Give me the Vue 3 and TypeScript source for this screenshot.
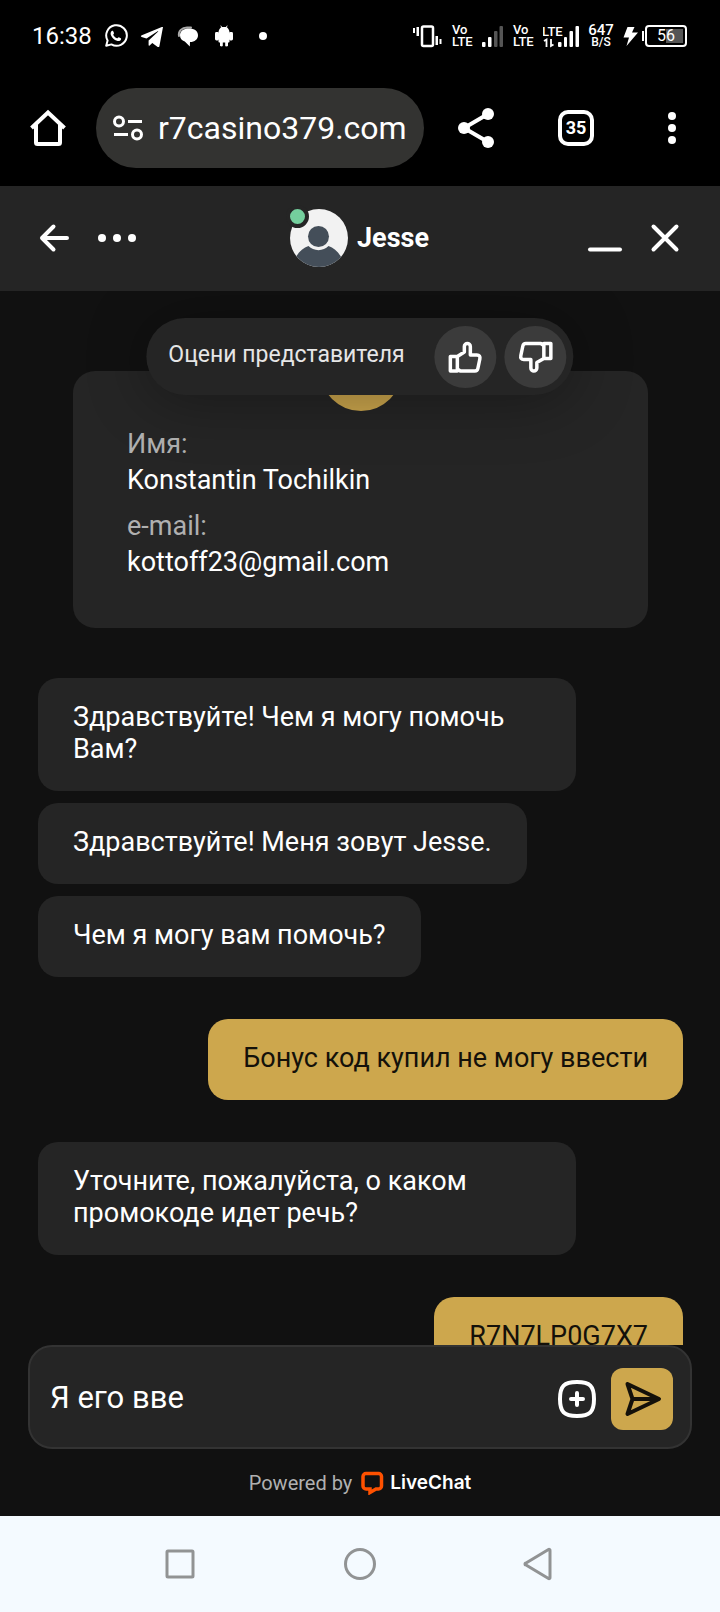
<script setup lang="ts">
import { ref } from 'vue'

interface Message {
  id: number
  text: string
}

interface MessageGroup {
  id: number
  author: 'agent' | 'visitor'
  messages: Message[]
}

const draft = ref('Я его вве')

const profile = [
  { label: 'Имя:', value: 'Konstantin Tochilkin' },
  { label: 'e-mail:', value: 'kottoff23@gmail.com' },
]

const groups: MessageGroup[] = [
  {
    id: 1,
    author: 'agent',
    messages: [
      { id: 1, text: 'Здравствуйте! Чем я могу помочь Вам?' },
      { id: 2, text: 'Здравствуйте! Меня зовут Jesse.' },
      { id: 3, text: 'Чем я могу вам помочь?' },
    ],
  },
  { id: 2, author: 'visitor', messages: [{ id: 4, text: 'Бонус код купил не могу ввести' }] },
  { id: 3, author: 'agent', messages: [{ id: 5, text: 'Уточните, пожалуйста, о каком промокоде идет речь?' }] },
  { id: 4, author: 'visitor', messages: [{ id: 6, text: 'R7N7LP0G7X7' }] },
]
</script>

<template>
  <div class="phone">
    <div class="status">
      <div class="status-left">
        <span class="time">16:38</span>
        <svg width="24" height="24" viewBox="0 0 24 24" aria-hidden="true">
          <path d="M2.2 21.8 3.6 16.6A10.3 10.3 0 1 1 7.4 20.4Z" fill="none" stroke="#fff" stroke-width="2" stroke-linejoin="round" />
          <path d="M7.2 7.4c.6-.8 1.600-1 2-.2l.8 1.900c.2.5-.9 1.300-.7 1.800.8 1.500 2.100 2.700 3.700 3.300.6.2 1.200-1.200 1.800-1l2 1c.7.4.2 1.700-.5 2.200-1 .7-2.200.8-3.400.4-2.700-.9-4.700-2.900-5.800-5.300-.6-1.400-.7-3 .1-4.100Z" fill="#fff" />
        </svg>
        <svg width="24" height="24" viewBox="0 0 24 24" aria-hidden="true">
          <path d="M23 3 19.400 22.300c-.2.900-.9 1-1.700.6l-5.400-4-2.700 2.700c-.6.5-1 .2-1-.6v-4.400L18.200 7.600c.4-.4-.1-.6-.6-.3L6.500 14.400 1.600 12.900c-1-.4-1-1.100.2-1.600L21.800 3.100c.7-.3 1.300-.2 1.200-.1Z" fill="#fff" />
        </svg>
        <svg width="24" height="24" viewBox="0 0 24 24" aria-hidden="true">
          <path d="M3 12C2 7 6 3.500 11 3.500h4" fill="none" stroke="#aaa" stroke-width="2" stroke-linecap="round" />
          <path d="M13 4.500c5.500 0 9 2.700 9 6.700 0 4-3.200 6.700-8 6.800l-.2 4.600-5-5C5.700 16.500 4 14.300 4 11.200 4 7.200 7.500 4.500 13 4.500Z" fill="#fff" />
        </svg>
        <svg width="24" height="24" viewBox="0 0 24 24" fill="#fff" aria-hidden="true">
          <path d="M6.500 8C7 5 8.400 3.800 9.300 3.300L8.300 1.800l.6-.3 1.200 1.600h3.800l1.200-1.600.6.300-1 1.500C15.600 3.800 17 5 17.500 8v9.500c0 .6-.4 1-1 1H16v3c0 1.200-2.800 1.200-2.800 0v-3h-2.400v3c0 1.200-2.800 1.200-2.800 0v-3h-.5c-.6 0-1-.4-1-1Z" />
          <rect x="3" y="8" width="4" height="8.500" rx="1.400" />
          <rect x="17" y="8" width="4" height="8.500" rx="1.400" />
        </svg>
        <svg width="24" height="24" viewBox="0 0 24 24" aria-hidden="true"><circle cx="15" cy="12" r="4" fill="#fff" /></svg>
      </div>
      <div class="status-right">
        <svg width="30" height="24" viewBox="0 0 30 24" fill="#fff" aria-hidden="true">
          <rect x="10" y="2.500" width="11" height="19.500" rx="1.500" fill="none" stroke="#fff" stroke-width="2.500" />
          <rect x="1" y="4" width="2" height="5" /><rect x="4.500" y="3" width="2.500" height="9" />
          <rect x="23.500" y="12" width="2.500" height="9" /><rect x="27.500" y="15" width="2" height="5" />
        </svg>
        <span class="volte"><span>Vo</span><span>LTE</span></span>
        <svg width="21" height="24" viewBox="0 0 21 24" fill="#fff" aria-hidden="true">
          <rect x="0" y="18" width="3.500" height="5" rx="1" /><rect x="6" y="13" width="3.500" height="10" rx="1" />
          <g fill="#555"><rect x="12" y="7" width="3.500" height="16" rx="1" /><rect x="17.500" y="2" width="3.500" height="21" rx="1" /></g>
        </svg>
        <span class="volte"><span>Vo</span><span>LTE</span></span>
        <svg width="36" height="24" viewBox="0 0 36 24" fill="#fff" aria-hidden="true">
          <text class="net" x="-1" y="12">LTE</text>
          <path d="M1 17 3.500 15.500V23M8 15V22L10.500 20.500" fill="none" stroke="#fff" stroke-width="1.800" />
          <rect x="15" y="18" width="3.500" height="5" rx="1" /><rect x="21" y="13" width="3" height="10" rx="1" />
          <rect x="26.500" y="7" width="3.500" height="16" rx="1" /><rect x="32.500" y="2" width="3.500" height="21" rx="1" />
        </svg>
        <span class="speed"><b>647</b><span>B/S</span></span>
        <span class="power">
          <svg width="16" height="24" viewBox="0 0 16 24" aria-hidden="true"><path d="M4.500 3H11.500L9 8.500H15L3.500 22l2.500-8.500H.5Z" fill="#fff" /></svg>
          <span class="cap"></span>
          <span class="battery">56</span>
        </span>
      </div>
    </div>

    <div class="toolbar">
      <button class="plain home" aria-label="Home">
        <svg width="40" height="40" viewBox="0 0 40 40" fill="none" stroke="#fff" stroke-width="4" stroke-linejoin="round" stroke-linecap="round">
          <path d="M3.500 20 20 4.500 36.500 20" stroke-linecap="butt" stroke-linejoin="miter" />
          <path d="M8 17V34.500a1.500 1.500 0 0 0 1.500 1.500h21a1.500 1.500 0 0 0 1.500-1.500V17" />
        </svg>
      </button>
      <button class="address">
        <svg width="32" height="28" viewBox="0 0 32 28" fill="none" stroke="#fff" stroke-width="3" aria-hidden="true">
          <circle cx="7" cy="7.500" r="4.500" /><path d="M16 7.500H30M2 20.500H16" /><circle cx="25" cy="20.500" r="4.500" />
        </svg>
        <span>r7casino379.com</span>
      </button>
      <div class="tools">
        <button class="plain" aria-label="Share">
          <svg width="40" height="40" viewBox="0 0 40 40" fill="#fff"><path d="M32 6 8 20 32 34" fill="none" stroke="#fff" stroke-width="4" /><circle cx="32" cy="6" r="6" /><circle cx="8" cy="20" r="6" /><circle cx="32" cy="34" r="6" /></svg>
        </button>
        <button class="plain" aria-label="Tabs"><span class="tabs">35</span></button>
        <button class="plain" aria-label="Menu">
          <svg width="40" height="40" viewBox="0 0 40 40" fill="#fff"><circle cx="20" cy="8" r="4" /><circle cx="20" cy="20" r="4" /><circle cx="20" cy="32" r="4" /></svg>
        </button>
      </div>
    </div>

    <header class="header">
      <div class="side">
        <button class="plain" aria-label="Back">
          <svg width="34" height="34" viewBox="0 0 34 34" fill="none" stroke="#fff" stroke-width="4" stroke-linecap="round" stroke-linejoin="round"><path d="M16.500 5.500 5 17 16.500 28.500M5 17H30" /></svg>
        </button>
        <button class="plain" aria-label="Options">
          <svg width="42" height="34" viewBox="0 0 42 34" fill="#fff"><circle cx="6" cy="17" r="4" /><circle cx="21" cy="17" r="4" /><circle cx="36" cy="17" r="4" /></svg>
        </button>
      </div>
      <div class="agent">
        <div class="avatar">
          <svg width="58" height="58" viewBox="0 0 58 58" aria-hidden="true">
            <clipPath id="face"><circle cx="29" cy="29" r="29" /></clipPath>
            <g clip-path="url(#face)">
              <rect width="58" height="58" fill="#f2f2f2" />
              <circle cx="28.500" cy="27.500" r="10.500" fill="#444e59" />
              <path d="M5 50C8 43 13 39 18.500 37c5 5.500 15 5.500 20 0C44 39 49 43 52 50V58H5Z" fill="#444e59" />
            </g>
          </svg>
          <span class="online"></span>
        </div>
        <h1>Jesse</h1>
      </div>
      <div class="side end">
        <button class="plain" aria-label="Minimize">
          <svg width="36" height="34" viewBox="0 0 36 34" stroke="#fff" stroke-width="4" stroke-linecap="round"><path d="M3 28.500H33" /></svg>
        </button>
        <button class="plain" aria-label="Close">
          <svg width="34" height="34" viewBox="0 0 34 34" stroke="#fff" stroke-width="4" stroke-linecap="round"><path d="M5.500 5.500 28.500 28.500M28.500 5.500 5.500 28.500" /></svg>
        </button>
      </div>
    </header>

    <main class="chat">
      <div class="rating">
        <span>Оцени представителя</span>
        <button aria-label="Нравится">
          <svg width="38" height="38" viewBox="0 0 38 38" fill="none" stroke="#fff" stroke-width="3.500" stroke-linejoin="round">
            <path d="M4 18.500H11V33H4ZM11 18.500 18 14V8.500C18 4.500 24 4.500 24 8.500V17H30.500C33 17 34 18.500 33.500 21L31.500 30.500C31.200 32 30 33 28.500 33H14L11 31" />
          </svg>
        </button>
        <button aria-label="Не нравится">
          <svg width="38" height="38" viewBox="0 0 38 38" fill="none" stroke="#fff" stroke-width="3.500" stroke-linejoin="round">
            <path d="M34.500 5.500H27.500V20.500H34.500ZM27.500 20.500 20.500 24.500V30C20.500 34 14.500 34 14.500 30V21.500H7.500C5 21.500 4 20 4.500 17.500L6.500 8C6.800 6.500 8 5.500 9.500 5.500H24.500L27.500 7.500" />
          </svg>
        </button>
      </div>

      <section class="card">
        <span class="badge"></span>
        <dl>
          <template v-for="row in profile" :key="row.label">
            <dt>{{ row.label }}</dt>
            <dd>{{ row.value }}</dd>
          </template>
        </dl>
      </section>

      <div v-for="group in groups" :key="group.id" class="group" :class="group.author">
        <p v-for="message in group.messages" :key="message.id" class="bubble">{{ message.text }}</p>
      </div>
    </main>

    <form class="composer" @submit.prevent>
      <input v-model="draft" type="text" aria-label="Сообщение" />
      <button type="button" class="plain" aria-label="Прикрепить">
        <svg width="40" height="40" viewBox="0 0 40 40" fill="none" stroke="#fff" stroke-width="4" stroke-linecap="round">
          <path d="M20 3C33 3 37 7 37 20S33 37 20 37 3 33 3 20 7 3 20 3ZM20 14V26M14 20H26" />
        </svg>
      </button>
      <button type="submit" class="send" aria-label="Отправить">
        <svg width="40" height="40" viewBox="0 0 40 40" fill="none" stroke="#14110a" stroke-width="4" stroke-linejoin="round">
          <path d="M5.500 5 37 20 5.500 35 10.500 20ZM10.500 20H36" />
        </svg>
      </button>
    </form>

    <footer class="powered">
      <span>Powered by</span>
      <a href="#">
        <svg width="24" height="24" viewBox="0 0 24 24" aria-hidden="true">
          <path d="M6 2.500H18.500a3 3 0 0 1 3 3V15a3 3 0 0 1-3 3H16L10 21.500V18H6a3 3 0 0 1-3-3V5.500a3 3 0 0 1 3-3Z" fill="none" stroke="#ff5100" stroke-width="3.500" />
        </svg>
        LiveChat
      </a>
    </footer>

    <nav class="system">
      <button class="plain" aria-label="Recent apps"><svg width="36" height="36" viewBox="0 0 36 36"><rect x="5" y="5" width="26" height="26" rx="1" /></svg></button>
      <button class="plain" aria-label="Home screen"><svg width="36" height="36" viewBox="0 0 36 36"><circle cx="18" cy="18" r="14.500" /></svg></button>
      <button class="plain" aria-label="System back"><svg width="36" height="36" viewBox="0 0 36 36"><path d="M26.500 3.500a1 1 0 0 1 1.500 1v27a1 1 0 0 1-1.500 1L4 19a1 1 0 0 1 0-2Z" /></svg></button>
    </nav>
  </div>
</template>

<style>
html,
body {
  margin: 0;
  background: #111;
}
</style>

<style scoped>
.phone {
  display: flex;
  flex-direction: column;
  height: 100vh;
  background: #111;
  color: #fff;
  font-family: Roboto, 'Noto Sans', sans-serif;
  font-size: 27px;
}

.phone * {
  box-sizing: border-box;
}

svg {
  display: block;
  flex: none;
}

button,
input {
  font: inherit;
  color: inherit;
}

.plain {
  display: flex;
  align-items: center;
  justify-content: center;
  padding: 0;
  border: 0;
  background: none;
}

.status {
  display: flex;
  flex: none;
  align-items: center;
  justify-content: space-between;
  height: 72px;
  padding: 0 33px 0 32px;
  background: #000;
}

.status-left {
  display: flex;
  align-items: center;
  gap: 12px;
}

.time {
  font-size: 24px;
}

.status-right {
  display: flex;
  align-items: center;
  gap: 10px;
}

.volte,
.speed {
  display: flex;
  flex-direction: column;
  font-size: 13px;
  font-weight: 500;
  line-height: 12px;
}

.volte {
  width: 20px;
}

.speed {
  align-items: center;
  width: 24px;
  font-size: 12px;
}

.speed b {
  font-size: 15px;
  font-weight: 500;
}

.net {
  font-size: 13px;
  font-weight: 500;
}

.power {
  display: flex;
  align-items: center;
}

.cap {
  width: 2px;
  height: 10px;
  margin-left: 3px;
  background: #fff;
}

.battery {
  width: 42px;
  height: 22px;
  margin-left: 1px;
  padding: 2px;
  border: 2px solid #fff;
  border-radius: 4px;
  background: linear-gradient(90deg, transparent 50%, #555 50%) content-box;
  font-size: 16px;
  line-height: 14px;
  text-align: center;
}

.toolbar {
  display: flex;
  flex: none;
  align-items: center;
  height: 114px;
  padding: 0 32px 2px 28px;
  background: #000;
}

.address {
  display: flex;
  flex: none;
  align-items: center;
  gap: 14px;
  width: 328px;
  height: 80px;
  margin-left: 28px;
  padding: 0 16px;
  border: 0;
  border-radius: 40px;
  background: #333331;
  font-size: 32px;
  white-space: nowrap;
}

.tools {
  display: flex;
  flex: 1;
  justify-content: space-between;
  margin-left: 32px;
}

.tools .plain:last-child {
  width: 32px;
}

.tabs {
  width: 36px;
  height: 36px;
  border: 4px solid #fff;
  border-radius: 10px;
  font-size: 18px;
  font-weight: 700;
  line-height: 28px;
  text-align: center;
}

.header {
  display: grid;
  flex: none;
  grid-template-columns: 1fr auto 1fr;
  align-items: center;
  height: 105px;
  padding: 0 38px 2px 37px;
  background: #252525;
}

.side {
  display: flex;
  gap: 25px;
}

.end {
  justify-content: flex-end;
}

.agent {
  display: flex;
  align-items: center;
  gap: 9px;
}

.avatar {
  position: relative;
}

.online {
  position: absolute;
  top: -4px;
  left: -4px;
  width: 23px;
  height: 23px;
  border: 4px solid #252525;
  border-radius: 50%;
  background: #74cf9d;
}

h1 {
  margin: 0;
  font-size: 27px;
  font-weight: 700;
  line-height: 32px;
}

.chat {
  position: relative;
  display: flex;
  flex: 1;
  flex-direction: column;
  min-height: 0;
  padding: 80px 37px 0 38px;
  overflow: hidden;
}

.rating {
  position: absolute;
  z-index: 1;
  top: 27px;
  left: 50%;
  display: flex;
  align-items: center;
  gap: 8px;
  height: 77px;
  padding: 0 7px 0 22px;
  border-radius: 39px;
  background: #252525;
  box-shadow: 0 4px 60px rgba(0, 0, 0, 0.35);
  color: #e6e6e6;
  font-size: 23px;
  white-space: nowrap;
  transform: translateX(-50%);
}

.rating span {
  margin: 0 22px 4px 0;
}

.rating button {
  display: flex;
  align-items: center;
  justify-content: center;
  width: 62px;
  height: 62px;
  padding: 0;
  border: 0;
  border-radius: 50%;
  background: #3b3b3b;
}

.card {
  position: relative;
  flex: none;
  margin: 0 35px 8px;
  padding: 55px 54px 38px;
  border-radius: 22px;
  background: #252525;
}

.badge {
  position: absolute;
  top: -42px;
  left: 50%;
  width: 82px;
  height: 82px;
  border-radius: 50%;
  background: #cda74d;
  transform: translateX(-50%);
}

dl {
  margin: 0;
}

dt {
  color: #b0b0b0;
  line-height: 36px;
}

dd {
  margin: 0 0 10px;
  line-height: 36px;
}

.group {
  display: flex;
  flex: none;
  flex-direction: column;
  align-items: flex-start;
  gap: 12px;
  margin-top: 42px;
}

.bubble {
  max-width: 538px;
  margin: 0;
  padding: 23px 35px 26px;
  border-radius: 20px;
  background: #252525;
  line-height: 32px;
}

.visitor {
  align-items: flex-end;
}

.visitor .bubble {
  background: #cda74d;
  color: #14110a;
}

.composer {
  display: flex;
  flex: none;
  align-items: center;
  gap: 14px;
  height: 104px;
  margin: 0 28px;
  padding: 4px 17px 0 20px;
  border: 2px solid #333;
  border-radius: 24px;
  background: #252525;
}

.composer input {
  flex: 1;
  min-width: 0;
  padding: 0 0 4px;
  border: 0;
  outline: 0;
  background: none;
  font-size: 31px;
}

.send {
  display: flex;
  align-items: center;
  justify-content: center;
  width: 62px;
  height: 62px;
  padding: 0;
  border: 0;
  border-radius: 12px;
  background: #cda74d;
}

.powered {
  display: flex;
  flex: none;
  align-items: center;
  justify-content: center;
  gap: 8px;
  height: 67px;
  color: #b0b0b0;
  font-size: 20px;
}

.powered a {
  display: flex;
  align-items: center;
  gap: 6px;
  color: #fff;
  font-family: Inter, sans-serif;
  font-size: 19px;
  font-weight: 600;
  text-decoration: none;
}

.system {
  display: flex;
  flex: none;
  align-items: center;
  justify-content: center;
  gap: 144px;
  height: 96px;
  background: #f4faff;
}

.system svg {
  fill: none;
  stroke: #919394;
  stroke-width: 3px;
}
</style>
